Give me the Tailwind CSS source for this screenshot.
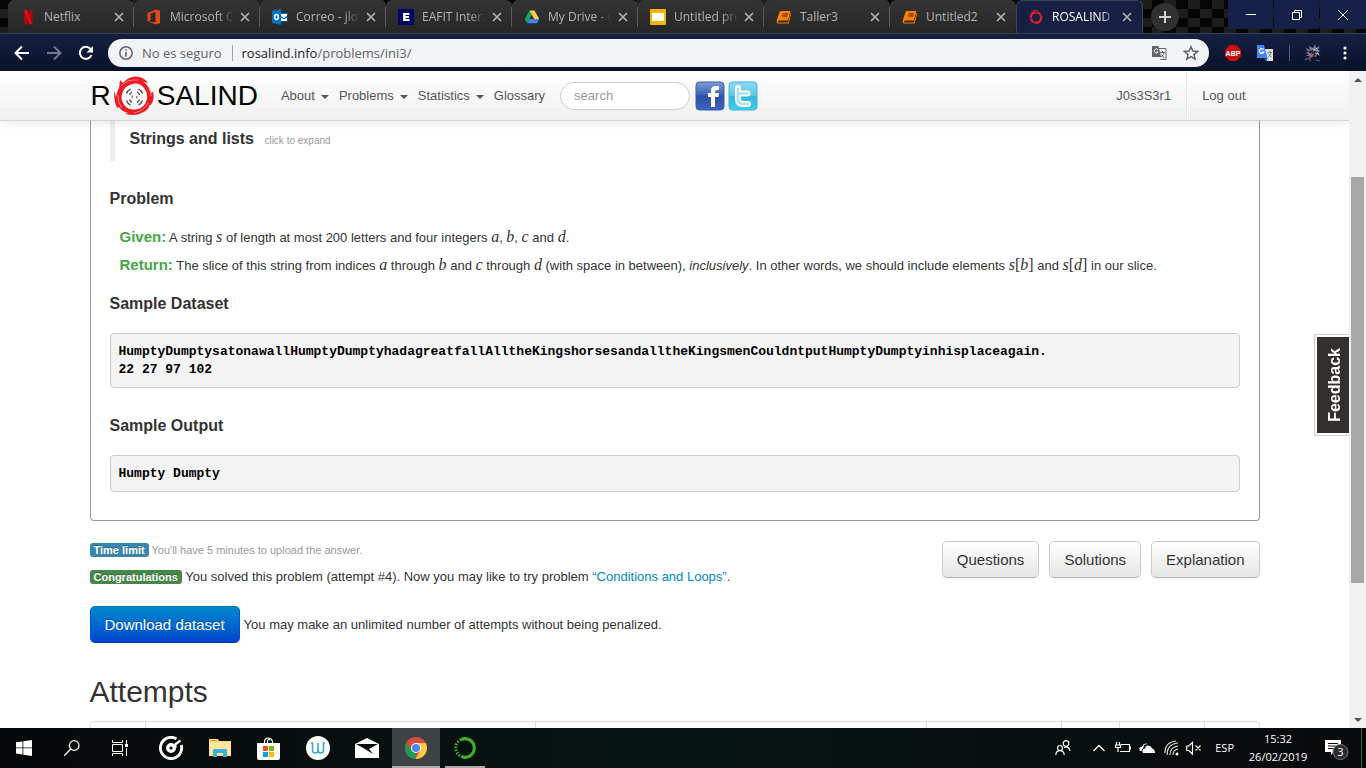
<!DOCTYPE html>
<html lang="en">
<head>
<meta charset="utf-8">
<title>ROSALIND | Strings and Lists</title>
<script src="https://cdn.jsdelivr.net/npm/@tailwindcss/browser@4"></script>
</head>
<body class="flex h-screen flex-col overflow-hidden bg-white font-['Liberation_Sans',Arial,sans-serif] text-[13px] leading-[18px] text-[#333]">

<svg class="hidden" aria-hidden="true">
  <symbol id="close" viewBox="0 0 10 10"><path d="M1 1l8 8m0-8l-8 8" stroke="currentColor" stroke-width="1.600" fill="none"/></symbol>
  <symbol id="book" viewBox="0 0 16 16"><path d="M5 2h9.500l-2.500 9.500H3.500L2 12.200q-.5 1 .5 1.300h9.500l2.600-9.500.6.300L12.700 14.500H2Q0 13.800.8 11.500L3.500 3Q4 2 5 2z" fill="#ff8000"/><path d="M6.500 5h5.500M6 7h5.500" stroke="#3a2208" stroke-width="1"/></symbol>
</svg>

<!-- Browser tabs -->
<div class="flex h-[33px] shrink-0 items-stretch overflow-hidden bg-[#0b0b0b] bg-[repeating-conic-gradient(#1d1d1d_0_25%,#050505_0_50%)] bg-[length:24px_18px] pl-2 font-['Open_Sans','Segoe_UI',sans-serif] text-[12px] text-[#b4b4b4]">
  <div class="flex min-w-0 flex-1 items-stretch" role="tablist">
    <div class="flex w-[126px] min-w-0 items-center rounded-t-md bg-linear-to-b from-[#343434] to-[#262626] pl-3 pr-[9px]" role="tab">
      <svg class="size-4 shrink-0" viewBox="0 0 16 16"><path d="M4 1h3v14l-3 .5zM9 1h3.500v14.500L9 15z" fill="#b1060f"/><path d="M4 1h3l5.500 14.500L9 15z" fill="#e50914"/></svg>
      <span class="ml-2 w-16 overflow-hidden whitespace-nowrap">Netflix</span>
      <button class="ml-auto" aria-label="Close tab"><svg class="size-[10px]"><use href="#close"/></svg></button>
      <span class="relative left-[9px] h-5 w-px bg-[#5a5a5a]"></span>
    </div>
    <div class="flex w-[126px] min-w-0 items-center rounded-t-md bg-linear-to-b from-[#343434] to-[#262626] pl-3 pr-[9px]" role="tab">
      <svg class="size-4 shrink-0" viewBox="0 0 16 16"><path d="M1.500 4L10 .5l4 1.200v12.600l-4 1.200-8.500-3 8 .9V3L4.500 4.200v7L1.500 12.400z" fill="#e64a19"/></svg>
      <span class="ml-2 w-16 overflow-hidden whitespace-nowrap [mask-image:linear-gradient(to_right,#000_75%,transparent)]">Microsoft Office</span>
      <button class="ml-auto" aria-label="Close tab"><svg class="size-[10px]"><use href="#close"/></svg></button>
      <span class="relative left-[9px] h-5 w-px bg-[#5a5a5a]"></span>
    </div>
    <div class="flex w-[126px] min-w-0 items-center rounded-t-md bg-linear-to-b from-[#343434] to-[#262626] pl-3 pr-[9px]" role="tab">
      <svg class="size-4 shrink-0" viewBox="0 0 16 16"><path d="M9 4h6.500v8.500H9z" fill="#0072c6"/><path d="M9 5h6v1.500L12 9 9 7zM9 8.500l3 2 3-2V12H9z" fill="#fff"/><path d="M0 2l9-2v16l-9-2z" fill="#0072c6"/><ellipse cx="4.500" cy="8" rx="1.800" ry="2.500" fill="none" stroke="#fff" stroke-width="1.500"/></svg>
      <span class="ml-2 w-16 overflow-hidden whitespace-nowrap [mask-image:linear-gradient(to_right,#000_75%,transparent)]">Correo - jlopez</span>
      <button class="ml-auto" aria-label="Close tab"><svg class="size-[10px]"><use href="#close"/></svg></button>
      <span class="relative left-[9px] h-5 w-px bg-[#5a5a5a]"></span>
    </div>
    <div class="flex w-[126px] min-w-0 items-center rounded-t-md bg-linear-to-b from-[#343434] to-[#262626] pl-3 pr-[9px]" role="tab">
      <svg class="size-4 shrink-0" viewBox="0 0 16 16"><path d="M0 0h16v16H0z" fill="#000066"/><path d="M5 4h6.500v2H7.500v1h3.500v2H7.500v1h4v2H5z" fill="#fff"/></svg>
      <span class="ml-2 w-16 overflow-hidden whitespace-nowrap [mask-image:linear-gradient(to_right,#000_75%,transparent)]">EAFIT Interactiva</span>
      <button class="ml-auto" aria-label="Close tab"><svg class="size-[10px]"><use href="#close"/></svg></button>
      <span class="relative left-[9px] h-5 w-px bg-[#5a5a5a]"></span>
    </div>
    <div class="flex w-[126px] min-w-0 items-center rounded-t-md bg-linear-to-b from-[#343434] to-[#262626] pl-3 pr-[9px]" role="tab">
      <svg class="size-4 shrink-0" viewBox="0 0 16 16"><path d="M5.500 1.500L8 5.800 3.200 14.300.8 10z" fill="#11a861"/><path d="M5.500 1.500h5L15.200 10h-5z" fill="#ffcf48"/><path d="M5.600 10h9.600l-2.400 4.300H3.200z" fill="#4285f4"/></svg>
      <span class="ml-2 w-16 overflow-hidden whitespace-nowrap [mask-image:linear-gradient(to_right,#000_75%,transparent)]">My Drive - Google</span>
      <button class="ml-auto" aria-label="Close tab"><svg class="size-[10px]"><use href="#close"/></svg></button>
      <span class="relative left-[9px] h-5 w-px bg-[#5a5a5a]"></span>
    </div>
    <div class="flex w-[126px] min-w-0 items-center rounded-t-md bg-linear-to-b from-[#343434] to-[#262626] pl-3 pr-[9px]" role="tab">
      <svg class="size-4 shrink-0" viewBox="0 0 16 16"><rect width="16" height="16" rx="1" fill="#f4b400"/><path d="M2 4h12v8H2z" fill="#fff"/></svg>
      <span class="ml-2 w-16 overflow-hidden whitespace-nowrap [mask-image:linear-gradient(to_right,#000_75%,transparent)]">Untitled presentation</span>
      <button class="ml-auto" aria-label="Close tab"><svg class="size-[10px]"><use href="#close"/></svg></button>
      <span class="relative left-[9px] h-5 w-px bg-[#5a5a5a]"></span>
    </div>
    <div class="flex w-[126px] min-w-0 items-center rounded-t-md bg-linear-to-b from-[#343434] to-[#262626] pl-3 pr-[9px]" role="tab">
      <svg class="size-4 shrink-0"><use href="#book"/></svg>
      <span class="ml-2 w-16 overflow-hidden whitespace-nowrap">Taller3</span>
      <button class="ml-auto" aria-label="Close tab"><svg class="size-[10px]"><use href="#close"/></svg></button>
      <span class="relative left-[9px] h-5 w-px bg-[#5a5a5a]"></span>
    </div>
    <div class="flex w-[126px] min-w-0 items-center rounded-t-md rounded-br-md bg-linear-to-b from-[#343434] to-[#262626] pl-3 pr-[10px]" role="tab">
      <svg class="size-4 shrink-0"><use href="#book"/></svg>
      <span class="ml-2 w-16 overflow-hidden whitespace-nowrap">Untitled2</span>
      <button class="ml-auto" aria-label="Close tab"><svg class="size-[10px]"><use href="#close"/></svg></button>
    </div>
    <div class="flex w-[127px] min-w-0 items-center rounded-t-md border-x border-t border-[#3d4256] bg-[#171f42] pl-[11px] pr-[10px] text-white" role="tab" aria-selected="true">
      <svg class="size-4 shrink-0" viewBox="0 0 16 16"><circle cx="8" cy="8.500" r="5.200" fill="none" stroke="#e0202e" stroke-width="2.200" stroke-dasharray="9 .6 5 .5"/><path d="M3 5q1.500-4 6.500-3.500M13.500 11q-2 4-6.500 3.500" fill="none" stroke="#e0202e" stroke-width="1"/></svg>
      <span class="ml-2 w-16 overflow-hidden whitespace-nowrap [mask-image:linear-gradient(to_right,#000_75%,transparent)]">ROSALIND | Strings</span>
      <button class="ml-auto text-[#b4b4b4]" aria-label="Close tab"><svg class="size-[10px]"><use href="#close"/></svg></button>
    </div>
    <button class="ml-2 mt-[3px] flex size-7 shrink-0 items-center justify-center rounded-full bg-[#303030] text-[#d0d0d0]" aria-label="New tab"><svg class="size-3" viewBox="0 0 12 12"><path d="M6 0v12M0 6h12" stroke="currentColor" stroke-width="2"/></svg></button>
  </div>
  <div class="flex h-[29px] gap-px">
    <button class="flex w-[45px] items-center justify-center bg-[#152049]" aria-label="Minimize"><svg class="size-[10px]" viewBox="0 0 10 10"><path d="M0 4.500h10" stroke="#fff"/></svg></button>
    <button class="flex w-[45px] items-center justify-center bg-[#152049]" aria-label="Restore"><svg class="size-[10px]" viewBox="0 0 10 10"><path d="M.5 2.500h7v7h-7zM2.500 2V.5h7v7H8" fill="none" stroke="#fff"/></svg></button>
    <button class="flex w-[46px] items-center justify-center bg-[#152049]" aria-label="Close"><svg class="size-[10px]" viewBox="0 0 10 10"><path d="M0 0l10 10M10 0L0 10" stroke="#fff"/></svg></button>
  </div>
</div>

<!-- Address bar -->
<div class="flex h-[38px] shrink-0 items-center border-t border-[#3b424f] bg-linear-to-b from-[#151f42] to-[#091229] pl-[14px] pr-[17px] font-['Open_Sans','Segoe_UI',sans-serif] text-white">
  <button aria-label="Back"><svg class="size-4" viewBox="0 0 16 16"><path d="M15 8H2M8 1.500L1.500 8 8 14.500" fill="none" stroke="#fff" stroke-width="2"/></svg></button>
  <button class="ml-4" aria-label="Forward"><svg class="size-4" viewBox="0 0 16 16"><path d="M1 8h13M8 1.500L14.500 8 8 14.500" fill="none" stroke="#72788c" stroke-width="2"/></svg></button>
  <button class="ml-4" aria-label="Reload"><svg class="size-4" viewBox="0 0 16 16"><path d="M13.500 10A6 6 0 1 1 12.500 4" fill="none" stroke="#fff" stroke-width="2"/><path d="M15 1v6.500H8.500z" fill="#fff"/></svg></button>
  <div class="ml-[14px] flex h-7 flex-1 items-center rounded-full bg-[#f1f3f4] pl-[11px] pr-[10px] text-[13px] text-[#5f6368]">
    <svg class="size-[14px]" viewBox="0 0 14 14"><circle cx="7" cy="7" r="6.200" fill="none" stroke="#5f6368" stroke-width="1.500"/><path d="M6.200 3.200h1.600v1.600H6.200zM6.200 6h1.600v4.800H6.200z" fill="#5f6368"/></svg>
    <span class="ml-[9px]">No es seguro</span>
    <span class="ml-[10px] mr-[9px] h-4 w-px bg-[#a0a4a8]"></span>
    <span class="flex-1"><span class="text-[#202124]">rosalind.info</span>/problems/ini3/</span>
    <svg class="size-4" viewBox="0 0 16 16"><path d="M6 3.500h9v11H9.500" fill="none" stroke="#5f6368"/><path d="M1 1h6.500l2.500 11H1z" fill="#5f6368"/><path d="M7 4.800A2.100 2.100 0 1 0 7.200 7H5" fill="none" stroke="#f1f3f4"/><path d="M9 7.500h5M11.500 6v1.500M13 7.500q-.5 3-3 4.500M10.500 9.500q1 2 3 3" fill="none" stroke="#5f6368"/></svg>
    <svg class="ml-4 size-4" viewBox="0 0 16 16"><path d="M8 1.800l1.900 4.300 4.700.4-3.600 3.100 1.100 4.600L8 11.700l-4.100 2.500L5 9.600 1.400 6.500l4.700-.4z" fill="none" stroke="#5f6368" stroke-width="1.500"/></svg>
  </div>
  <svg class="ml-4 size-4" viewBox="0 0 16 16"><path d="M4.700 0h6.600L16 4.700v6.600L11.300 16H4.700L0 11.300V4.700z" fill="#c70d0d"/><text x="8" y="10.600" text-anchor="middle" font-size="7" font-weight="700" font-family="Liberation Sans" fill="#fff">ABP</text></svg>
  <svg class="ml-4 size-4" viewBox="0 0 16 16"><path d="M7 4h9v12H9.500z" fill="#dfe3e8"/><path d="M0 0h7l3.500 13H0z" fill="#4285f4"/><path d="M7 13h4l-2 3z" fill="#1a56c4"/><path d="M6.500 4.500A2.300 2.300 0 1 0 6.800 7H4.700" fill="none" stroke="#fff" stroke-width="1.200"/><path d="M10.500 7.500H15M13 6v1.500M14 7.500q-.5 3-2.500 4M11.500 9q1 2 3 3" fill="none" stroke="#75808c"/></svg>
  <span class="ml-4 mr-[14px] h-4 w-px bg-[#525a73]"></span>
  <svg class="size-[18px]" viewBox="0 0 18 18"><path d="M2 4l4 2-1-4 4 2 2-4 1 4 4-2-2 4 3 1-3 1 2 4-3-2-1 3-3-1-2 2-3 1 2-3-4 0 3-2-4-1 3-1z" fill="#777b95"/><path d="M4 7l5-1 4 2-2 4-4-1z" fill="#23243a"/><path d="M6 9l4 1-2 3-2-1z" fill="#c0545a"/><path d="M9 7l4-3M11 9l4 1" stroke="#d4d6e4" stroke-width=".8"/><path d="M1 16q3-3 6 1M12 16l4 1" stroke="#70537c" stroke-width="1.200" fill="none"/></svg>
  <button class="ml-[19px]" aria-label="Menu"><svg class="h-4 w-2" viewBox="0 0 8 16"><circle cx="4" cy="3" r="1.600" fill="#fff"/><circle cx="4" cy="8" r="1.600" fill="#fff"/><circle cx="4" cy="13" r="1.600" fill="#fff"/></svg></button>
</div>

<!-- Page viewport -->
<div class="relative flex min-h-0 flex-1">
  <div class="flex min-w-0 flex-1 flex-col overflow-hidden">

    <header class="z-10 flex h-[50px] shrink-0 justify-center border-b border-[#d4d4d4] bg-linear-to-b from-white to-[#f0f0f0] shadow-[0_1px_10px_rgba(0,0,0,0.1)]">
      <div class="flex w-full max-w-[1170px] items-center text-[#555]">
        <a href="#" class="flex items-center text-[28px] leading-none text-black" aria-label="Rosalind">
          <span class="pl-px">R</span>
          <svg class="mx-[3px] size-10" viewBox="0 0 40 40"><circle cx="20" cy="20.500" r="15" fill="none" stroke="#ec1c24" stroke-width="4.500"/><path fill="#ec1c24" d="M5 13L6 4l3 3Q16-.5 24 .8q7 1 10 6.500-4-2-6-1.500 7 4 9 11l2-1q2 8-2 13l-2 1q0 4-7 7-7 4-17 1l4-1Q8 36 5 31l-2 1Q-1 24 .5 15L2 21q1-5 3-8z"/><path fill="#f8f8f8" d="M21 7.500q6 0 9 4.500 4 5 3 11-2 8-9 10-8 2-13-3-5-6-3-12 2-9 13-10.500z"/><path d="M7 10Q13 3 24 4M34 11q3 4 3 9M34 27q-4 8-14 10M4 19q-1 7 4 13" stroke="#f7b0b3" fill="none" stroke-width=".7"/><g fill="none" stroke="#444"><circle cx="20.500" cy="21" r="2.500" stroke-dasharray="2.400 5.454" transform="rotate(-25 20.500 21)"/><g stroke-width="1.200"><path d="M15.500 19q.5-2 2.500-3M23 16q2 1 2.500 3M25.500 23.500q-.5 2-2.500 3M18 26.500q-2-1-2.500-3"/><path d="M12.500 17.500q1-3 4-4.500M24.500 13q3 1.500 4 4.500M28.500 24.500q-1 3-4 4.500M16.500 29q-3-1.500-4-4.500"/></g></g></svg>
          <span>SALIND</span>
        </a>
        <nav class="ml-[23px] flex items-center gap-[10px]">
          <a href="#" class="flex items-center gap-[6px]">About <span class="mt-[2px] border-x-4 border-t-4 border-x-transparent border-t-[#555]"></span></a>
          <a href="#" class="flex items-center gap-[6px]">Problems <span class="mt-[2px] border-x-4 border-t-4 border-x-transparent border-t-[#555]"></span></a>
          <a href="#" class="flex items-center gap-[6px]">Statistics <span class="mt-[2px] border-x-4 border-t-4 border-x-transparent border-t-[#555]"></span></a>
          <a href="#">Glossary</a>
        </nav>
        <input type="text" aria-label="search" placeholder="search" class="ml-[15px] h-7 w-[130px] rounded-full border border-[#ccc] bg-white px-[13px] placeholder:text-[#999]">
        <a href="#" class="ml-[5px]" aria-label="Facebook"><svg class="size-[30px]" viewBox="0 0 30 30"><defs><linearGradient id="fb" x1="0" y1="0" x2="0" y2="1"><stop stop-color="#7d9bd6"/><stop offset=".45" stop-color="#3f63b5"/><stop offset=".5" stop-color="#2d4fa5"/><stop offset="1" stop-color="#3c66bd"/></linearGradient></defs><rect x="1" y="1" width="28" height="28" rx="3.500" fill="url(#fb)" stroke="#3b5cab"/><path d="M16 26V16h-3v-4h3v-2.500Q16 5 20.500 5H24v4h-2q-2 0-2 2v1h4l-.5 4H20v10z" fill="#fff"/></svg></a>
        <a href="#" class="ml-[3px]" aria-label="Twitter"><svg class="size-[30px]" viewBox="0 0 30 30"><defs><linearGradient id="tw" x1="0" y1="0" x2="0" y2="1"><stop stop-color="#8bdcf2"/><stop offset=".48" stop-color="#5bc8e9"/><stop offset=".5" stop-color="#36b3de"/><stop offset="1" stop-color="#42cdf0"/></linearGradient></defs><rect x="1" y="1" width="28" height="28" rx="3.500" fill="url(#tw)" stroke="#3fb4d6"/><path d="M10 7v11q0 5 5 5h5M10 12.500h9.500" fill="none" stroke="#fff" stroke-width="6" stroke-linecap="round" stroke-linejoin="round"/><path d="M10 8v10q0 5 5 5h4.500M11 12.500h8" fill="none" stroke="#a5e4f5" stroke-width="2.500" stroke-linecap="round"/></svg></a>
        <div class="ml-auto flex items-center self-stretch">
          <a href="#" class="px-[15px]">J0s3S3r1</a>
          <span class="w-[2px] self-stretch border-l border-[#e8e8e8] bg-white"></span>
          <a href="#" class="px-[14px]">Log out</a>
        </div>
      </div>
    </header>

    <main class="mx-auto w-full max-w-[1170px] shrink-0">
      <section class="rounded-b border-x border-b border-[#999] px-[19px] pb-7">
        <blockquote class="h-10 border-l-[5px] border-[#eee] pl-[15px] pt-[6px]">
          <h3 class="text-[16px] leading-6 font-bold">Strings and lists <a href="#" class="ml-[6px] text-[10px] font-normal text-[#999]">click to expand</a></h3>
        </blockquote>
        <h3 class="mt-[26px] text-[16px] leading-6 font-bold">Problem</h3>
        <div class="mt-3 ml-[10px] leading-7">
          <p class="h-7"><b class="text-[15px] text-[#46a546]">Given:</b> A string <i class="font-['Liberation_Serif',serif] text-[16px]">s</i> of length at most 200 letters and four integers <i class="font-['Liberation_Serif',serif] text-[16px]">a</i>, <i class="font-['Liberation_Serif',serif] text-[16px]">b</i>, <i class="font-['Liberation_Serif',serif] text-[16px]">c</i> and <i class="font-['Liberation_Serif',serif] text-[16px]">d</i>.</p>
          <p class="h-7"><b class="text-[15px] text-[#46a546]">Return:</b> The slice of this string from indices <i class="font-['Liberation_Serif',serif] text-[16px]">a</i> through <i class="font-['Liberation_Serif',serif] text-[16px]">b</i> and <i class="font-['Liberation_Serif',serif] text-[16px]">c</i> through <i class="font-['Liberation_Serif',serif] text-[16px]">d</i> (with space in between), <em>inclusively</em>. In other words, we should include elements <span class="font-['Liberation_Serif',serif] text-[16px]"><i>s</i>[<i>b</i>]</span> and <span class="font-['Liberation_Serif',serif] text-[16px]"><i>s</i>[<i>d</i>]</span> in our slice.</p>
        </div>
        <h3 class="mt-[13px] text-[16px] leading-6 font-bold">Sample Dataset</h3>
        <pre class="mt-[17px] rounded border border-[#ccc] bg-[#f4f4f4] px-2 pt-[9px] pb-2 font-['Liberation_Mono',monospace] font-bold text-black">HumptyDumptysatonawallHumptyDumptyhadagreatfallAlltheKingshorsesandalltheKingsmenCouldntputHumptyDumptyinhisplaceagain.
22 27 97 102</pre>
        <h3 class="mt-[26px] text-[16px] leading-6 font-bold">Sample Output</h3>
        <pre class="mt-[17px] rounded border border-[#ccc] bg-[#f4f4f4] px-2 pt-[9px] pb-2 font-['Liberation_Mono',monospace] font-bold text-black">Humpty Dumpty</pre>
      </section>

      <div class="mt-5 flex items-start justify-between">
        <div>
          <p class="text-[11px] text-[#999]"><span class="rounded-[3px] bg-[#3a87ad] px-1 py-px font-bold text-white [text-shadow:0_-1px_0_rgba(0,0,0,0.25)]">Time limit</span> You'll have 5 minutes to upload the answer.</p>
          <p class="mt-[9px]"><span class="rounded-[3px] bg-[#468847] px-1 py-px text-[11px] font-bold text-white [text-shadow:0_-1px_0_rgba(0,0,0,0.25)]">Congratulations</span> You solved this problem (attempt #4). Now you may like to try problem <a href="#" class="text-[#08c]">“Conditions and Loops”</a>.</p>
        </div>
        <div class="flex gap-[10px] text-[15px]">
          <button class="h-[37px] rounded-[5px] border border-[#ccc] border-b-[#b3b3b3] bg-linear-to-b from-white to-[#e6e6e6] px-[14px] shadow-xs">Questions</button>
          <button class="h-[37px] rounded-[5px] border border-[#ccc] border-b-[#b3b3b3] bg-linear-to-b from-white to-[#e6e6e6] px-[14px] shadow-xs">Solutions</button>
          <button class="h-[37px] rounded-[5px] border border-[#ccc] border-b-[#b3b3b3] bg-linear-to-b from-white to-[#e6e6e6] px-[14px] shadow-xs">Explanation</button>
        </div>
      </div>

      <div class="mt-5 flex items-center gap-1">
        <button class="h-[37px] rounded-[5px] border border-[#0055cc] border-t-[#0077b3] border-b-[#003ab3] bg-linear-to-b from-[#0088cc] to-[#0044cc] px-[14px] text-[15px] text-white [text-shadow:0_-1px_0_rgba(0,0,0,0.25)]">Download dataset</button>
        <span>You may make an unlimited number of attempts without being penalized.</span>
      </div>

      <h1 class="mt-[31px] text-[30px] leading-9">Attempts</h1>
      <table class="mt-[11px] w-full table-fixed border-separate border-spacing-0 rounded border border-[#ddd]">
        <colgroup><col class="w-[54px]"><col class="w-[390px]"><col><col class="w-[135px]"><col class="w-[58px]"><col class="w-[85px]"><col class="w-[55px]"></colgroup>
        <thead><tr class="h-9 [&>th+th]:border-l [&>th+th]:border-[#ddd]"><th></th><th></th><th></th><th></th><th></th><th></th><th></th></tr></thead>
      </table>
    </main>
  </div>

  <!-- Scrollbar -->
  <div class="flex w-[17px] shrink-0 flex-col items-center bg-[#f1f1f1] px-[2px]">
    <div class="flex h-[17px] shrink-0 items-center"><span class="border-x-4 border-b-4 border-x-transparent border-b-[#505050]"></span></div>
    <div class="grow-[89]"></div>
    <div class="w-full grow-[406] bg-[#a8a8a8]"></div>
    <div class="grow-[128]"></div>
    <div class="flex h-[17px] shrink-0 items-center"><span class="border-x-4 border-t-4 border-x-transparent border-t-[#505050]"></span></div>
  </div>

  <a href="#" class="absolute top-[263px] right-[17px] z-20 border border-r-0 border-[#ccc] bg-white py-[2px] pl-[2px]">
    <span class="flex h-24 w-8 items-center justify-end bg-[#33302d]"><span class="rotate-180 text-[16px] leading-7 font-bold text-white [writing-mode:vertical-rl]">Feedback</span></span>
  </a>
</div>

<!-- Taskbar -->
<footer class="flex h-10 shrink-0 items-stretch justify-between bg-linear-to-r from-[#060809] via-[#071613] to-[#08090b] font-['Open_Sans','Segoe_UI',sans-serif] text-[11px] text-white">
  <div class="flex">
    <button class="flex w-12 items-center justify-center" aria-label="Start"><svg class="size-4" viewBox="0 0 16 16"><path d="M0 2.300l6.500-.9v6.100H0zM7.300 1.300L16 0v7.500H7.300zM0 8.300h6.500v6.200L0 13.600zM7.300 8.300H16V16l-8.700-1.300z" fill="#fff"/></svg></button>
    <button class="flex w-12 items-center justify-center" aria-label="Search"><svg class="size-4" viewBox="0 0 16 16"><circle cx="10.200" cy="5.500" r="4.800" fill="none" stroke="#fff" stroke-width="1.200"/><path d="M6.800 9L0 15.800" stroke="#fff" stroke-width="1.300"/></svg></button>
    <button class="flex w-12 items-center justify-center" aria-label="Task view"><svg class="size-4" viewBox="0 0 16 16"><path d="M.5 0v2.500h10V0M.5 16v-2.500h10V16M.5 4.500h10v7H.5zM14.500 0v4M14.500 8v8" fill="none" stroke="#fff"/><path d="M13 4h3v3h-3z" fill="#fff"/></svg></button>
    <button class="ml-[2px] flex w-[49px] items-center justify-center" aria-label="Groove Music"><svg class="size-[24px]" viewBox="0 0 24 24"><path d="M17.500 2.900A10.600 10.600 0 1 0 22.200 9" fill="none" stroke="#fff" stroke-width="2.800"/><circle cx="12" cy="12" r="3.300" fill="none" stroke="#fff" stroke-width="3.400"/><path d="M15.500 12V7.500L21 3.500l1 2-4.500 3.500v3z" fill="#fff"/></svg></button>
    <button class="flex w-[49px] items-center justify-center" aria-label="File Explorer"><svg class="h-[18px] w-[22px]" viewBox="0 0 22 18"><path d="M0 0h9l1 2h12v15H0z" fill="#fbd774"/><path d="M0 3h22v13H0z" fill="#ffe69b"/><path d="M1 1h7v1H1z" fill="#e8a70c"/><path d="M4 18v-7l1-1h12l1 1v7h-4v-4H8v4z" fill="#38ade6"/></svg></button>
    <button class="flex w-[49px] items-center justify-center" aria-label="Store"><svg class="h-[23px] w-[23px]" viewBox="0 0 23 23"><path d="M7.500 6V4Q8 1 11 1t4.500 3v2M10.500 6V3.500Q12 1 13 3.500" fill="none" stroke="#fff" stroke-width="1.200"/><path d="M0 6h23v15q0 2-2 2H2q-2 0-2-2z" fill="#fff"/><path d="M6 9h5v5H6z" fill="#f25022"/><path d="M12 9h5v5h-5z" fill="#7fba00"/><path d="M6 15h5v5H6z" fill="#00a4ef"/><path d="M12 15h5v5h-5z" fill="#ffb900"/></svg></button>
    <button class="flex w-[49px] items-center justify-center" aria-label="Wondershare"><svg class="size-6" viewBox="0 0 24 24"><circle cx="12" cy="12" r="12" fill="#fff"/><path d="M5 7h1.500v7q0 3 2.800 3t2.700-3V7v7q0 3 2.800 3t2.700-3V7H19" fill="none" stroke="#3aa3dc" stroke-width="1.600"/></svg></button>
    <button class="flex w-[49px] items-center justify-center" aria-label="Mail"><svg class="h-5 w-6" viewBox="0 0 24 20"><path d="M0 6l12-6 12 6v14H0z" fill="#fff"/><path d="M1 6h22l-9 5 4 5-8-5z" fill="#080b0c"/></svg></button>
    <button class="ml-px flex w-12 items-center justify-center border-b-2 border-[#aaa] bg-[#3d4344]" aria-label="Chrome"><svg class="mt-[2px] size-[22px]" viewBox="0 0 22 22"><circle cx="11" cy="11" r="11" fill="#dd4b3e"/><path d="M1.500 5.500L6.500 14 11 16l-.5 6A11 11 0 0 1 1.500 5.500z" fill="#1a9d5a"/><path d="M11 6h9.800A11 11 0 0 1 10.500 22L15.500 13.500z" fill="#ffcd42"/><circle cx="11" cy="11" r="5" fill="#fff"/><circle cx="11" cy="11" r="4" fill="#4688f1"/></svg></button>
    <button class="mx-[5px] flex w-10 items-center justify-center border-b-2 border-[#aaa]" aria-label="Anaconda"><svg class="mt-[2px] size-[22px]" viewBox="0 0 22 22"><path d="M7 2.600A9.300 9.300 0 1 1 7 19.400" fill="none" stroke="#43b02a" stroke-width="3"/><path d="M7 2.600A9.300 9.300 0 0 0 7 19.400" fill="none" stroke="#43b02a" stroke-width="3" stroke-dasharray="1.500 1.500"/></svg></button>
  </div>
  <div class="flex items-center pr-1">
    <svg class="size-4" viewBox="0 0 16 16"><g fill="none" stroke="#fff" stroke-width="1.200"><circle cx="11" cy="3.500" r="2.800"/><circle cx="5" cy="8" r="2.500"/><path d="M.8 15q.2-4.300 4.200-4.300T9.200 15M9 7.500q5-2 6 3.500"/></g></svg>
    <svg class="ml-[22px] h-4 w-3" viewBox="0 0 12 16"><path d="M.5 11L6 5.500 11.500 11" fill="none" stroke="#fff" stroke-width="1.300"/></svg>
    <svg class="ml-[10px] size-4" viewBox="0 0 16 16"><path d="M6 4.500h8.500v7H5M15.500 6.500v3M1.500 2v2.500M4.500 2v2.500M.5 5h5v2.500h-5zM3 8v4" fill="none" stroke="#fff" stroke-width="1.200"/></svg>
    <svg class="ml-2 size-4" viewBox="0 0 16 16"><path d="M1 11Q-1 7 3 6.500 5 2 9 4q-5 0-4.500 4-2 1-2 3zM4 13Q2 9 6 8.500 7 4 11 6q2 1 2 2.500Q16 9 16 13z" fill="#fff"/></svg>
    <svg class="ml-[9px] size-4" viewBox="0 0 16 16"><path d="M3 15Q3 4 14 3M6 15q0-8 8-9M9 15q0-5 5-6M.8 13Q1 2 12 1" fill="none" stroke="#ddd" stroke-width="1.100"/><circle cx="13" cy="14" r="1.500" fill="#fff"/></svg>
    <svg class="ml-[6px] size-4" viewBox="0 0 16 16"><path d="M.8 6v4.500h2L6.500 14V2.500L2.800 6zM9.500 5.500l5 5m0-5l-5 5" fill="none" stroke="#fff" stroke-width="1.200"/></svg>
    <span class="ml-[13px]">ESP</span>
    <div class="ml-[13px] w-[62px] text-center leading-[18px]"><div>15:32</div><div>26/02/2019</div></div>
    <button class="relative ml-4 h-6 w-6" aria-label="Notifications"><svg class="size-6" viewBox="0 0 24 24"><path d="M0 4h16v12H8.500L6 19v-3H0z" fill="#fff"/><path d="M3 7.500h10M3 10h10M3 12.500h6" stroke="#090c0d"/><circle cx="15.500" cy="16" r="7.500" fill="#292b2d" stroke="#777"/><text x="15.500" y="20" text-anchor="middle" font-size="11" font-family="Open Sans" fill="#fff">3</text></svg></button>
    <span class="ml-3 h-10 w-px bg-[#555]"></span>
  </div>
</footer>
</body>
</html>
